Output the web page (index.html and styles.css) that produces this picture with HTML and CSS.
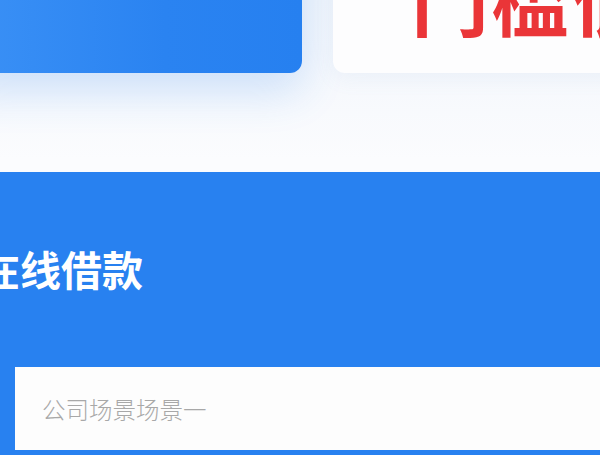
FILE: index.html
```html
<html><head><title>在线借款</title>
<link rel="stylesheet" href="styles.css">
</head>
<body>
<div class="page">
  <div class="top-row">
    <div class="promo-card"></div>
    <div class="tag-card">
      <span class="tag-text">门槛低</span>
    </div>
  </div>
  <div class="loan-panel">
    <h2 class="panel-title">在线借款</h2>
    <div class="scene-input">
      <span class="placeholder">公司场景场景一</span>
    </div>
  </div>
</div>
</body></html>
```
FILE: styles.css
```css
body {
  margin: 0;
  padding: 0;
  background-color: #f6f8fc;
  font-family: 'Noto Sans CJK SC', 'Noto Sans', sans-serif;
  overflow: hidden;
}
.page {
  width: 600px;
  height: 455px;
  overflow: hidden;
  background: linear-gradient(180deg, #f1f5fb 0%, #fbfcfe 160px, #fbfcfe 100%);
}
.top-row {
  display: flex;
  gap: 31px;
  margin-top: -77px;
}
.promo-card {
  flex: 0 0 342px;
  height: 150px;
  margin-left: -40px;
  border-radius: 12px;
  background: linear-gradient(90deg, #3b91f6, #2a83f1 60%, #2680f0);
  box-shadow: 0 18px 44px rgba(38, 128, 240, 0.2);
}
.tag-card {
  flex: 0 0 320px;
  height: 150px;
  box-sizing: border-box;
  padding: 35px 0 0 78px;
  border-radius: 12px;
  background: #fdfdfe;
  box-shadow: 0 6px 20px rgba(120, 150, 200, 0.08);
  white-space: nowrap;
}
.tag-text {
  display: block;
  font-size: 78px;
  line-height: 1;
  font-weight: 700;
  color: #ea3538;
  letter-spacing: 2px;
}
.loan-panel {
  margin-top: 99px;
  height: 300px;
  background: #2881f0;
  padding-top: 68px;
  box-sizing: border-box;
}
.panel-title {
  margin: 0 0 71px -21px;
  font-size: 41px;
  line-height: 56px;
  font-weight: 700;
  color: #fff;
}
.scene-input {
  margin-left: 15px;
  height: 83px;
  display: flex;
  align-items: center;
  padding-left: 27px;
  background: #fdfdfd;
}
.placeholder {
  font-size: 23.5px;
  color: #a8a8a8;
  font-weight: 300;
}
```
